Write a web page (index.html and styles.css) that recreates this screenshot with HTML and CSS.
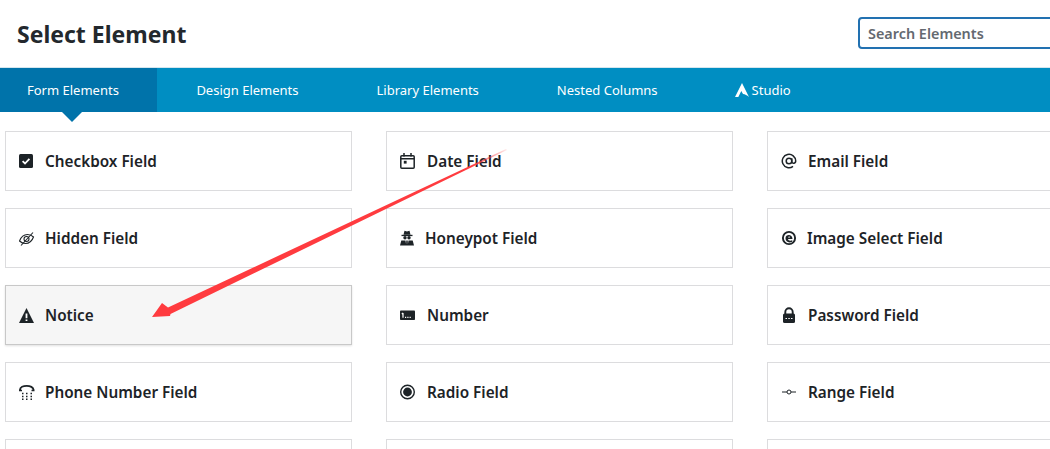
FILE: index.html
```html
<!DOCTYPE html>
<html lang="en">
  <head>
    <meta charset="UTF-8" />
    <meta name="viewport" content="width=device-width, initial-scale=1.0" />
    <title>Select Element</title>
    <link rel="stylesheet" href="styles.css">
  </head>
  <body>
    <header class="top">
      <h1>Select Element</h1>
      <input class="search" type="text" placeholder="Search Elements" />
    </header>

    <nav class="tabs">
      <a class="tab active">Form Elements</a>
      <a class="tab">Design Elements</a>
      <a class="tab">Library Elements</a>
      <a class="tab">Nested Columns</a>
      <a class="tab studio">
        <svg class="studio-icon" viewBox="0 0 14 14"><path d="M7 0 14 14C12 12.300 10 11.300 8 11L6.300 8 3.300 14H0z" /></svg>
        Studio
      </a>
    </nav>

    <ul class="grid">
      <li class="card">
        <svg class="icon" viewBox="0 0 16 16"><rect y="1" width="14" height="14" rx="1.500" /><path class="cut" d="M3.600 8.200 6 10.500 10.400 5.800" /></svg>
        Checkbox Field
      </li>
      <li class="card">
        <svg class="icon wide" viewBox="0 0 16 16"><rect class="line" x=".8" y="2.800" width="13.400" height="12.400" rx="1" /><path class="line" d="M.8 5.800h13.400M4 0v3.500M11 0v3.500" /><rect x="3.800" y="7.800" width="2.800" height="2.800" /></svg>
        Date Field
      </li>
      <li class="card">
        <svg class="icon wide" viewBox="0 0 16 16"><circle class="line" cx="8" cy="8" r="2.800" /><path class="line" d="M10.800 5.200v3.600c0 2 3.900 2 3.900-.8a6.700 6.700 0 1 0-2.700 5.400" /></svg>
        Email Field
      </li>

      <li class="card">
        <svg class="icon" viewBox="0 0 16 16"><path class="eye" d="M.5 11C2 7 5 4.500 8.500 4.500c2.500 0 4.500 1 6 2.500-1.500 4-4.500 6.500-8 6.500-2.500 0-4.500-1-6-2.500z" /><circle class="eye" cx="7.500" cy="9" r="2.500" /><path class="eye" d="M2 15.500 14 2.500" /></svg>
        Hidden Field
      </li>
      <li class="card">
        <svg class="icon tight" viewBox="0 0 16 16"><path d="M3.500 4.800 4.500 .8 7 1.500 9.500 .8 10.500 4.800z" /><rect x="1.500" y="4.800" width="11" height="1.300" /><circle cx="5" cy="7.800" r="1.700" /><circle cx="9" cy="7.800" r="1.700" /><path d="M0 15.500 1.300 10.500H5.500L6.300 15.500zM7.700 15.500 8.500 10.500H12.700L14 15.500zM6.300 10.500h1.400L8 15.500H6z" /></svg>
        Honeypot Field
      </li>
      <li class="card">
        <svg class="icon" viewBox="0 0 16 16"><circle class="thick" cx="8" cy="8" r="6.100" /><path d="M4.500 8.300C4.500 3.800 11.500 3.800 11.500 9H7C7.200 10.800 9.500 11 11.300 10.200V11.800C8 13.300 4.500 12 4.500 8.300zM7 7.500h2.200C9 6 7.300 6 7 7.500z" /></svg>
        Image Select Field
      </li>

      <li class="card hover">
        <svg class="icon" viewBox="0 0 16 16"><path d="M7.500 1 15 16H0z" /><path class="cut" d="M7.500 6.500v4.700M7.500 12.400v1.500" /></svg>
        Notice
      </li>
      <li class="card">
        <svg class="icon wide" viewBox="0 0 16 16"><rect y="3.500" width="15" height="9.500" rx=".8" /><path class="cut-thin" d="M3 6v4.800M1.800 6.900 3 6" /><path class="cut-thin" d="M5 10.300h1.200M7.300 10.300h1.200M9.600 10.300h1.200" /></svg>
        Number
      </li>
      <li class="card">
        <svg class="icon wide" viewBox="0 0 16 16"><rect x="2" y="6.500" width="12" height="9.500" rx="1.500" /><path class="thick" d="M4.300 7V5a3.700 3.700 0 0 1 7.400 0v2" /><path class="cut-thin" d="M4.500 11.500h1.500M7.300 11.500h1.500M10 11.500h1.500" /></svg>
        Password Field
      </li>

      <li class="card">
        <svg class="icon" viewBox="0 0 16 16"><path class="thick" d="M1 6C1 .5 14.500 .5 14.500 6" /><path class="dots" d="M0 6.500h3M12.500 6.500h3M3 9.500h1.500M7 9.500h1.500M11.500 9.500h1.500M3 12.500h1.500M7 12.500h1.500M11.500 12.500h1.500M3 15.200h1.500M7 15.200h1.500M11.500 15.200h1.500" /></svg>
        Phone Number Field
      </li>
      <li class="card">
        <svg class="icon wide" viewBox="0 0 16 16"><circle class="thin-ring" cx="7.500" cy="8" r="6.800" /><circle cx="7.500" cy="8" r="4.400" /></svg>
        Radio Field
      </li>
      <li class="card">
        <svg class="icon wide" viewBox="0 0 16 16"><path class="thin" d="M1 8h5M10 8h5" /><circle class="thin" cx="8" cy="8" r="2" /></svg>
        Range Field
      </li>

      <li class="card"></li>
      <li class="card"></li>
      <li class="card"></li>
    </ul>

    <svg class="arrow" viewBox="0 0 520 330">
      <defs>
        <linearGradient id="arrowFade" x1="507" y1="149" x2="472" y2="167" gradientUnits="userSpaceOnUse">
          <stop offset="0" stop-color="#ff3b3f" stop-opacity=".1" />
          <stop offset="1" stop-color="#ff3b3f" />
        </linearGradient>
      </defs>
      <path fill="url(#arrowFade)" d="M506 149 168 307.500 162 303 152 317 170 316 170.500 314 507 150z" />
    </svg>
  </body>
</html>
```

FILE: styles.css
```css
html,
body {
  height: 100%;
}

body {
  margin: 0;
  overflow: hidden;
  position: relative;
  background: #fff;
  color: #1d2327;
  font-family: "Noto Sans", "Open Sans", sans-serif;
}

/* header row */
.top {
  display: flex;
  justify-content: space-between;
  align-items: center;
  box-sizing: border-box;
  height: 68px;
  padding-left: 17px;
  border-bottom: 1px solid #d5e6ee;
  overflow: hidden;
}

.top h1 {
  margin: 0;
  font-size: 23px;
  font-weight: 700;
  color: #23282d;
}

.search {
  flex: none;
  box-sizing: border-box;
  width: 260px;
  height: 32px;
  margin: 0 -68px 1px 0;
  padding: 0 8px;
  border: 2px solid #2271b1;
  border-radius: 4px;
  font-family: inherit;
  font-size: 14.4px;
  font-weight: 600;
}

.search::placeholder {
  color: #646970;
  opacity: 1;
}

/* tabs */
.tabs {
  display: flex;
  height: 44px;
  background: #008ec2;
}

.tab {
  display: flex;
  align-items: center;
  padding: 0 39px;
  color: #fff;
  font-size: 13px;
}

.tab.active {
  position: relative;
  padding: 0 38.5px 0 27px;
  background: #0073aa;
}

/* little pointer under the active tab */
.tab.active::after {
  content: "";
  position: absolute;
  left: 62px;
  top: 100%;
  border-top: 10px solid #0073aa;
  border-left: 10px solid transparent;
  border-right: 10px solid transparent;
}

.studio-icon {
  width: 14px;
  height: 14px;
  margin: 0 3px 0 -1px;
  fill: #fff;
}

/* element cards */
.grid {
  display: grid;
  grid-template-columns: repeat(3, 347px);
  grid-auto-rows: 60px;
  gap: 17px 34px;
  margin: 0;
  padding: 19px 0 0 5px;
  list-style: none;
}

.card {
  display: flex;
  align-items: center;
  box-sizing: border-box;
  padding-left: 13px;
  border: 1px solid #dcdcde;
  font-size: 15.3px;
  font-weight: 600;
}

.card.hover {
  background: #f6f6f6;
  border-color: #c8c8c8;
  box-shadow: 0 1px 2px rgba(0, 0, 0, 0.12);
}

.icon {
  flex: none;
  width: 16px;
  height: 16px;
  margin-right: 10px;
  fill: #1d2327;
}

.icon.tight {
  margin-right: 9px;
}

.icon.wide {
  margin-right: 11px;
}

.icon .line {
  fill: none;
  stroke: #1d2327;
  stroke-width: 1.5;
}

.icon .eye {
  fill: none;
  stroke: #1d2327;
  stroke-width: 1.1;
}

.icon .thin {
  fill: none;
  stroke: #1d2327;
  stroke-width: 1;
}

.icon .thick {
  fill: none;
  stroke: #1d2327;
  stroke-width: 1.9;
}

.icon .thin-ring {
  fill: none;
  stroke: #1d2327;
  stroke-width: 1.4;
}

.icon .cut {
  fill: none;
  stroke: #fff;
  stroke-width: 1.8;
}

.icon .cut-thin {
  fill: none;
  stroke: #fff;
  stroke-width: 1.2;
}

.icon .dots {
  fill: none;
  stroke: #1d2327;
  stroke-width: 1.5;
}

/* red annotation drawn over the screenshot */
.arrow {
  position: absolute;
  left: 0;
  top: 0;
  width: 520px;
  height: 330px;
  pointer-events: none;
}
```
